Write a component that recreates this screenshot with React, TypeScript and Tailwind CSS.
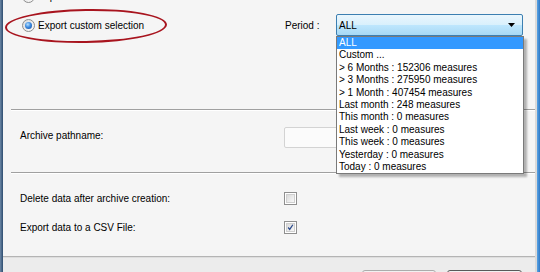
const periods = [
  "ALL",
  "Custom ...",
  "> 6 Months : 152306 measures",
  "> 3 Months : 275950 measures",
  "> 1 Month : 407454 measures",
  "Last month : 248 measures",
  "This month : 0 measures",
  "Last week : 0 measures",
  "This week : 0 measures",
  "Yesterday : 0 measures",
  "Today : 0 measures",
];

const Radio = ({ checked }: { checked?: boolean }) => (
  <div className="w-[13px] h-[13px] shrink-0 rounded-full border border-[#8c8c8c] bg-gradient-to-br from-[#dcdcdc] to-[#fbfbfb] flex items-center justify-center">
    {checked && (
      <div className="w-[7px] h-[7px] rounded-full bg-[radial-gradient(circle_at_40%_35%,#b9e1ff_0%,#3d8be0_45%,#14489a_100%)]" />
    )}
  </div>
);

const Check = ({ checked }: { checked?: boolean }) => (
  <div className="w-[13px] h-[13px] shrink-0 border border-[#8f8f8f] bg-white p-px">
    <div className="w-full h-full border border-[#cfcfcf] bg-gradient-to-br from-[#dadada] to-[#f8f8f8] flex items-center justify-center">
      {checked && (
        <svg width="9" height="9" viewBox="0 0 9 9">
          <path d="M1.5 4.5 L3.5 7 L7.5 1" fill="none" stroke="#2a4a8c" strokeWidth="1.6" />
        </svg>
      )}
    </div>
  </div>
);

const Separator = ({ inset }: { inset?: boolean }) => (
  <div className={"shrink-0 " + (inset ? "ml-[8px]" : "")}>
    <div className="h-px bg-[#a0a0a0]" />
    <div className="h-px bg-white" />
  </div>
);

const App = () => {
  return (
    <div className="w-[540px] h-[272px] overflow-hidden flex bg-[#f5f5f5] text-black text-[10px] font-['Liberation_Sans',Arial,sans-serif]">
      <div className="w-[3px] shrink-0 bg-gradient-to-r from-[#6d88a6] to-[#2d4d70]" />

      <div className="flex-1 flex flex-col relative">
        {/* export mode */}
        <div className="h-[109px] shrink-0 flex flex-col">
          <div className="-mt-[10px] h-[13px] flex items-center pl-[19px] gap-[3px]">
            <Radio />
            <span>Export all data</span>
          </div>
          <div className="mt-[11px] h-[22px] flex items-center">
            <div className="w-[282px] flex items-center pl-[19px] gap-[3px]">
              <Radio checked />
              <span>Export custom selection</span>
            </div>
            <div className="w-[51px]">Period :</div>
            <div className="w-[187px] h-[22px] relative">
              <div className="h-full border border-[#3c7fb1] rounded-[2px] bg-[linear-gradient(#eaf6fd_0%,#d9f0fc_50%,#bee6fd_51%,#a7d9f5_100%)] flex items-center justify-between pl-[2px] pr-[6px]">
                <span>ALL</span>
                <svg width="8" height="4" viewBox="0 0 8 4">
                  <path d="M0 0 H7 L3.5 4 Z" fill="#000" />
                </svg>
              </div>
              <div className="absolute top-[22px] left-0 w-[188px] bg-white border border-[#7a7a7a] shadow-[3px_3px_2px_rgba(0,0,0,0.28)] z-10">
                {periods.map((p, i) => (
                  <div
                    key={p}
                    className={
                      "h-[12.4px] leading-[12.4px] pl-[2px] whitespace-nowrap " +
                      (i === 0 ? "bg-[#3399ff] text-white" : "")
                    }
                  >
                    {p}
                  </div>
                ))}
              </div>
            </div>
          </div>
        </div>

        <Separator inset />

        {/* archive path */}
        <div className="h-[61px] shrink-0">
          <div className="mt-[16px] h-[21px] flex">
            <div className="w-[281px] pl-[17px] pt-px">Archive pathname:</div>
            <div className="w-[236px] h-[21px] border border-[#d3d3d3] rounded-[2px] bg-[#fbfbfb]" />
          </div>
        </div>

        <Separator inset />

        {/* options */}
        <div className="h-[82px] shrink-0">
          <div className="mt-[18px] h-[13px] flex items-center">
            <div className="w-[281px] pl-[17px]">Delete data after archive creation:</div>
            <Check />
          </div>
          <div className="mt-[16px] h-[13px] flex items-center">
            <div className="w-[281px] pl-[17px]">Export data to a CSV File:</div>
            <Check checked />
          </div>
        </div>

        <div className="h-px shrink-0 bg-[#b4b4b4]" />
        <div className="h-px shrink-0 bg-[#dedede]" />

        {/* buttons */}
        <div className="flex-1 min-h-0 overflow-hidden bg-[#ececec] flex items-start gap-[11px] pl-[359px] pt-[12px]">
          <div className="w-[74px] h-[23px] shrink-0 border border-[#acacac] rounded-[3px] bg-gradient-to-b from-[#f2f2f2] to-[#dddddd]" />
          <div className="w-[75px] h-[23px] shrink-0 border border-[#5a5a5a] rounded-[3px] bg-gradient-to-b from-[#f2f2f2] to-[#dddddd]" />
        </div>

        {/* annotation */}
        <div className="absolute left-[2px] top-[9px] w-[162px] h-[34px] rounded-[50%] border-[2.5px] border-[#a8141e] -rotate-1" />
      </div>

      <div className="w-[2px] shrink-0 bg-[#dadada]" />
      <div className="w-[3px] shrink-0 bg-gradient-to-r from-[#5aa3e4] to-[#2e78c4]" />
    </div>
  );
};

export default App;
